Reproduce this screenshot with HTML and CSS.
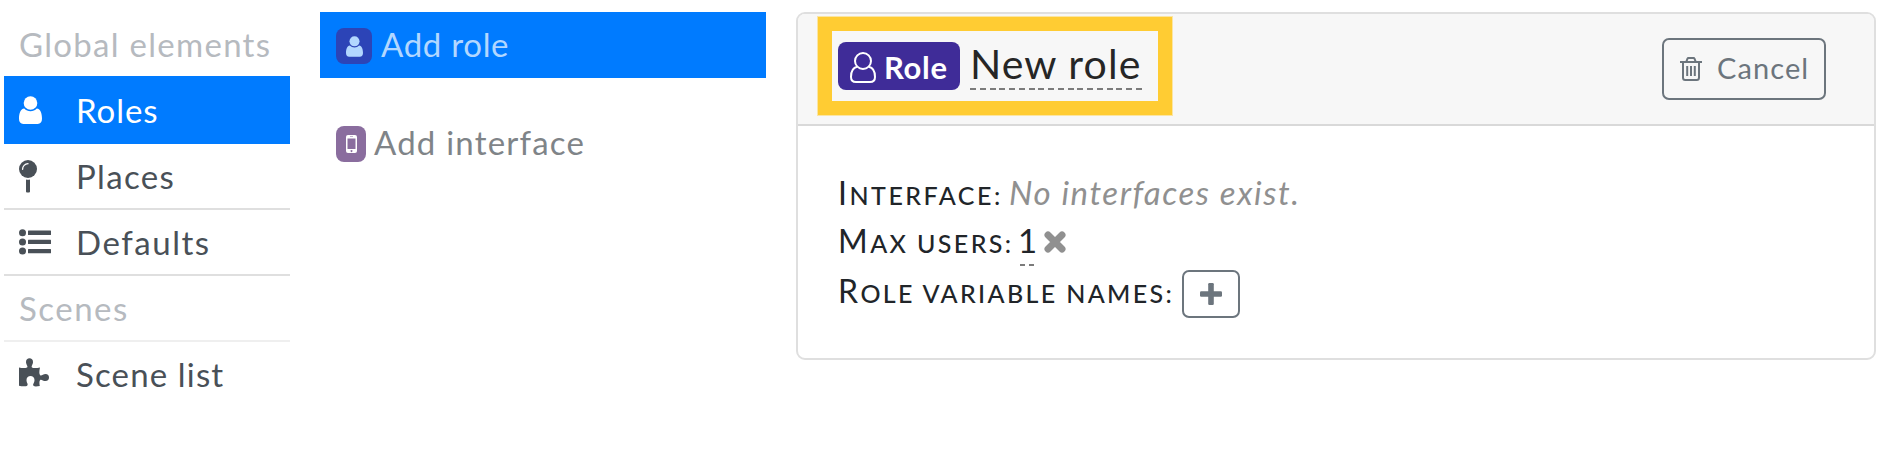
FILE: index.html
```html
<!DOCTYPE html>
<html lang="en">
<head>
<meta charset="utf-8">
<title>Roles</title>
<link rel="stylesheet" href="styles.css">
</head>
<body>
<svg class="defs" width="0" height="0">
  <symbol id="user" viewBox="0 0 23 28"><circle cx="11.5" cy="7" r="6.8"/><path d="M5.2 12.6C7 14.4 9 15.300 11.500 15.300S16 14.400 17.800 12.600C21.500 13.100 23 17.500 23 22.800C23 26 21.400 28 18.700 28H4.300C1.600 28 0 26 0 22.800C0 17.500 1.500 13.100 5.200 12.600Z"/></symbol>
</svg>
<div class="page">
  <nav class="sidebar">
    <div class="item heading"><span class="t-global">Global elements</span></div>
    <div class="item active"><span class="ico"><svg width="23" height="28"><use href="#user"/></svg></span><span class="t-roles">Roles</span></div>
    <div class="item"><span class="ico pin"><svg width="18" height="33" viewBox="0 0 18 33"><circle cx="9" cy="9" r="9" fill="currentColor"/><path d="M3.600 9.300A5.500 5.500 0 0 1 9 3.700" fill="none" stroke="#fff" stroke-width="1.300" stroke-linecap="round"/><path d="M7 19.600Q9 20 11 19.600V31.500Q11 32.500 10 32.500H8Q7 32.500 7 31.500Z" fill="currentColor"/></svg></span><span class="t-places">Places</span></div>
    <div class="item"><span class="ico"><svg width="32" height="26" viewBox="0 0 32 26"><circle cx="3.500" cy="3.700" r="3.500"/><circle cx="3.500" cy="12.900" r="3.500"/><circle cx="3.500" cy="22" r="3.500"/><rect x="9" y="1.500" width="23" height="4.400" rx=".5"/><rect x="9" y="10.700" width="23" height="4.400" rx=".5"/><rect x="9" y="19.900" width="23" height="4.400" rx=".5"/></svg></span><span class="t-defaults">Defaults</span></div>
    <div class="item heading light"><span class="t-scenes">Scenes</span></div>
    <div class="item last"><span class="ico puzzle"><svg width="30" height="29" viewBox="0 0 30 29"><path d="M0 9.500C3 10.200 6.500 10.300 8 9.500C9.500 8.500 7 6.500 7 3.900C7 1.500 8.500 .2 10.500 .2S14 1.500 14 3.900C14 6.500 11.800 8.300 13 9.400C14.300 10.500 18 10 21 9.400C20.200 13 20 15.800 21.200 17.200C22.300 18.500 24 16 26.500 16C28.800 16 30 17.500 30 19.500S28.800 23 26.500 23C24 23 22.500 20.900 21.200 21.900C20 22.900 20.400 25.500 20.800 28C18 28.500 15.500 28.900 14.500 27.700C13.300 26.200 15.500 25 15.500 22C15.500 19.500 13.600 18.100 11.500 18.100S7.500 19.500 7.500 22C7.500 25 9.500 26 8.300 27.400C7.300 28.600 3.500 28.500 0 27.800Z"/></svg></span><span class="t-list">Scene list</span></div>
  </nav>
  <section class="adders">
    <div class="add selected"><span class="chip role"><svg width="17" height="21"><use href="#user"/></svg></span><span class="t-addrole">Add role</span></div>
    <div class="add"><span class="chip iface"><svg width="11" height="18" viewBox="0 0 11 18"><path fill-rule="evenodd" d="M2 0H9Q11 0 11 2V16Q11 18 9 18H2Q0 18 0 16V2Q0 0 2 0ZM1.500 3.400V14H9.500V3.400ZM4 1.400V2H7V1.400ZM5.500 15A1 1 0 1 0 5.510 15Z"/></svg></span><span class="t-addif">Add interface</span></div>
  </section>
  <main class="card">
    <header class="card-head">
      <div class="highlight">
        <span class="badge"><svg width="26" height="31" viewBox="0 0 26 31" class="outline"><circle cx="13" cy="9" r="8"/><path d="M7.200 14.800C2.500 15.800 1 20 1 25C1 28 2.800 30 6 30H20C23.200 30 25 28 25 25C25 20 23.500 15.800 18.800 14.800"/></svg><span class="t-badge">Role</span></span>
        <span class="name"><span class="t-name">New role</span></span>
      </div>
      <button class="btn cancel"><svg width="22" height="24" viewBox="0 0 22 24" class="outline"><path d="M0 5H22M6.200 5L7.400 1.800Q7.700 1 8.500 1H13.500Q14.300 1 14.600 1.800L15.800 5M3 5V20.500Q3 23 5.200 23H16.800Q19 23 19 20.500V5"/><path d="M7.200 9V19M11 9V19M14.800 9V19"/></svg><span class="t-cancel">Cancel</span></button>
    </header>
    <div class="card-body">
      <div class="row r1"><span class="label t-l1">Interface:</span><em class="t-none">No interfaces exist.</em></div>
      <div class="row r2"><span class="label t-l2">Max users:</span><span class="one">1</span><svg width="22" height="22" viewBox="0 0 22 22" class="cross"><path d="M4 4L18 18M18 4L4 18"/></svg></div>
      <div class="row r3"><span class="label t-l3">Role variable names:</span><button class="btn plus"><svg width="22" height="22" viewBox="0 0 22 22"><rect x="8.200" width="5.600" height="22" rx="1.200"/><rect y="8.200" width="22" height="5.600" rx="1.200"/></svg></button></div>
    </div>
  </main>
</div>
</body>
</html>
```
FILE: styles.css
```css
* { box-sizing: border-box; }
body { margin: 0; background: #fff; color: #212529; font: 33px/64px Lato, "Open Sans", sans-serif; white-space: nowrap; }
svg { display: block; flex: none; fill: currentColor; }
.defs { position: absolute; }
.outline { fill: none; stroke: currentColor; stroke-width: 2; }
.page { display: flex; padding: 12px 16px 0 4px; height: 462px; }

.sidebar { width: 286px; color: #495057; }
.item { display: flex; align-items: center; height: 66px; padding-left: 15px; border-bottom: 2px solid #dfdfdf; }
.item > span:last-child, .add > span:last-child { padding-bottom: 1px; line-height: 62px; }
.heading { color: #b6babf; border-color: #fff; }
.light { border-color: #efefef; }
.last { border-color: transparent; }
.active { height: 68px; margin-top: -2px; padding-top: 2px; background: #007bff; border-color: #007bff; color: #fff; }
.ico { width: 57px; flex: none; }
.pin { padding-top: 1px; }
.puzzle { padding-bottom: 4px; }

.adders { width: 446px; margin-left: 30px; }
.add { display: flex; align-items: center; height: 66px; padding: 0 0 2px 16px; margin-bottom: 32px; color: #7f8488; }
.selected { background: #007bff; color: #b2d7ff; }
.chip { display: flex; align-items: center; justify-content: center; height: 36px; border-radius: 8px; margin: 4px 9px 0 0; }
.role { width: 36px; background: #2c44b7; }
.iface { width: 30px; background: #8a6d9e; color: #fff; margin-right: 8px; }

.card { width: 1080px; height: 348px; margin-left: 30px; border: 2px solid #dfdfdf; border-radius: 9px; overflow: hidden; }
.card-head { display: flex; justify-content: space-between; align-items: flex-start; height: 112px; padding: 3px 48px 0 20px; background: #f7f7f7; border-bottom: 2px solid #d9d9d9; }
.highlight { display: flex; width: 354px; height: 98px; border: 14px solid #fc3; padding: 11px 0 0 6px; box-shadow: 0 0 0 1px #fbe5a3; }
.badge { display: flex; align-items: flex-start; width: 122px; height: 48px; padding: 10px 0 0 12px; border-radius: 8px; background: #3f2c98; color: #fff; font-size: 31px; font-weight: 700; line-height: 36px; }
.t-badge { margin: -3px 0 0 8px; letter-spacing: .700px; }
.name { width: 172px; height: 48px; margin-left: 10px; padding-left: 0; color: #262626; font-size: 41px; line-height: 44px; background: repeating-linear-gradient(90deg, #7b7b7b 0 6px, transparent 6px 9.760px) 0 100% / 100% 2px no-repeat; }
.btn { display: flex; align-items: center; border: 2px solid #6c757d; border-radius: 7px; background: transparent; color: #6c757d; font: 29px/34px Lato, sans-serif; padding: 0; }
.cancel { width: 164px; height: 62px; margin-top: 21px; padding-left: 16px; }
.t-cancel { margin-left: 15px; padding-bottom: 2px; letter-spacing: 1.100px; }

.card-body { padding: 42px 0 0 40px; }
.row { display: flex; align-items: flex-start; height: 48px; line-height: 48px; }
.label { display: block; font-size: 25px; line-height: 50px; text-transform: uppercase; font-weight: 500; letter-spacing: 2.350px; }
.label::first-letter { font-size: 32px; font-weight: 400; line-height: 50px; }
.t-none { color: #909090; letter-spacing: 1.550px; margin-left: 1px; }
.one { width: 14px; height: 50px; text-indent: -2px; background: repeating-linear-gradient(90deg, #7b7b7b 0 5px, transparent 5px 9px) 0 100% / 100% 2px no-repeat; }
.cross { margin: 15px 0 0 10px; fill: none; stroke: #909090; stroke-width: 7; stroke-linecap: round; }
.r3 { padding-top: 2px; }
.plus { width: 58px; height: 48px; justify-content: center; margin-top: 4px; }

.t-l1 { width: 170px; letter-spacing: 2.500px; }
.t-l2 { width: 182px; letter-spacing: 2.400px; }
.t-l3 { width: 344px; }

.t-global { letter-spacing: 1.280px; }
.t-roles { letter-spacing: .950px; }
.t-places { letter-spacing: 1.350px; }
.t-defaults { letter-spacing: 1.550px; }
.t-scenes { letter-spacing: 1.500px; }
.t-list { letter-spacing: 1.150px; }
.t-addrole { letter-spacing: .700px; }
.t-addif { letter-spacing: 1.200px; }
.t-name { letter-spacing: 1.100px; }
```
